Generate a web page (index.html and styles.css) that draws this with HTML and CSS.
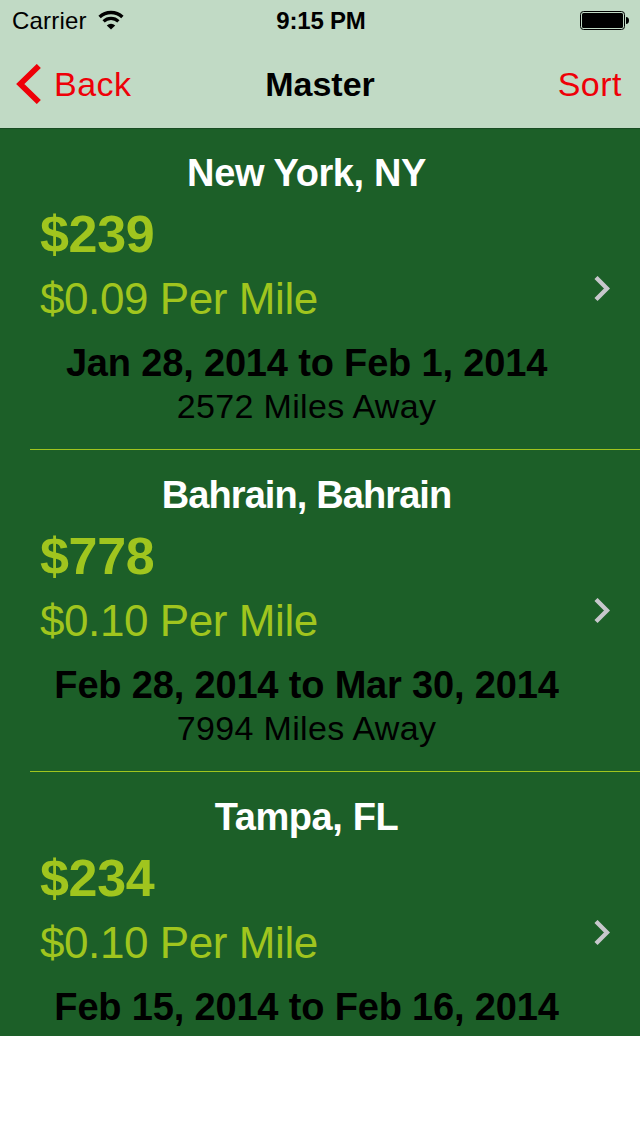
FILE: index.html
```html
<!DOCTYPE html>
<html lang="en">
<head>
    <meta charset="UTF-8">
    <meta name="viewport" content="width=device-width, initial-scale=1.0">
    <title>Master</title>
    <link rel="stylesheet" href="styles.css">
</head>
<body>
    <header class="header">
        <div class="status-bar">
            <div class="status-left">
                <span class="carrier">Carrier</span>
                <svg class="wifi" width="26" height="20" viewBox="0 0 26 20">
                    <path d="M1.600 7 A16.500 16.500 0 0 1 24.400 7" fill="none" stroke="#000" stroke-width="3.4"/>
                    <path d="M5.600 11.300 A10.700 10.700 0 0 1 20.400 11.300" fill="none" stroke="#000" stroke-width="3.2"/>
                    <path d="M13 19.600 L8.800 15.400 A6.200 6.200 0 0 1 17.200 15.400 Z"/>
                </svg>
            </div>
            <span class="time">9:15 PM</span>
            <div class="status-right">
                <svg width="50" height="20" viewBox="0 0 50 20">
                    <rect x="0.5" y="0.5" width="44" height="18" rx="3" fill="none" stroke="#000"/>
                    <rect x="2" y="2" width="41" height="15" rx="1.5"/>
                    <path d="M46 6 C48 6 49 7.500 49 9.500 C49 11.500 48 13 46 13 Z"/>
                </svg>
            </div>
        </div>
        <nav class="nav-bar">
            <a class="back" href="#">
                <svg width="26" height="40" viewBox="0 0 26 40">
                    <path d="M22.800 2 L4.300 20 L22.800 38" fill="none" stroke="#ee0008" stroke-width="5.800"/>
                </svg>
                <span class="back-text">Back</span>
            </a>
            <h1 class="title">Master</h1>
            <a class="sort" href="#">Sort</a>
        </nav>
    </header>

    <main class="trips">
        <div class="trip">
            <div class="info">
                <div class="city">New York, NY</div>
                <div class="price">$239</div>
                <div class="per-mile">$0.09 Per Mile</div>
                <div class="dates">Jan 28, 2014 to Feb 1, 2014</div>
                <div class="away">2572 Miles Away</div>
            </div>
            <svg class="arrow" width="16" height="26" viewBox="0 0 16 26">
                <path d="M2 1.500 L13 12.500 L2 23.500" fill="none" stroke="#c7c7cc" stroke-width="4.400"/>
            </svg>
        </div>
        <div class="trip">
            <div class="info">
                <div class="city city-long">Bahrain, Bahrain</div>
                <div class="price">$778</div>
                <div class="per-mile">$0.10 Per Mile</div>
                <div class="dates">Feb 28, 2014 to Mar 30, 2014</div>
                <div class="away">7994 Miles Away</div>
            </div>
            <svg class="arrow" width="16" height="26" viewBox="0 0 16 26">
                <path d="M2 1.500 L13 12.500 L2 23.500" fill="none" stroke="#c7c7cc" stroke-width="4.400"/>
            </svg>
        </div>
        <div class="trip">
            <div class="info">
                <div class="city">Tampa, FL</div>
                <div class="price">$234</div>
                <div class="per-mile">$0.10 Per Mile</div>
                <div class="dates">Feb 15, 2014 to Feb 16, 2014</div>
            </div>
            <svg class="arrow" width="16" height="26" viewBox="0 0 16 26">
                <path d="M2 1.500 L13 12.500 L2 23.500" fill="none" stroke="#c7c7cc" stroke-width="4.400"/>
            </svg>
        </div>
    </main>
</body>
</html>
```
FILE: styles.css
```css
* {
    box-sizing: border-box;
}

body {
    margin: 0;
    width: 640px;
    height: 1136px;
    overflow: hidden;
    font-family: "Liberation Sans", Arial, sans-serif;
    background-color: #fff;
    color: #000;
}

svg {
    display: block;
}

.header {
    height: 128px;
    background-color: #c1dac5;
}

.status-bar {
    height: 42px;
    padding: 0 10px 0 12px;
    display: grid;
    grid-template-columns: 1fr auto 1fr;
    align-items: center;
    font-size: 24px;
    line-height: 42px;
}

.status-left {
    display: flex;
    align-items: center;
    gap: 11px;
}

.carrier {
    letter-spacing: 0.2px;
}

.wifi {
    margin-bottom: 2px;
}

.time {
    font-weight: bold;
    letter-spacing: -0.2px;
}

.status-right {
    display: flex;
    justify-content: flex-end;
}

.nav-bar {
    height: 84px;
    padding: 0 18px 0 16px;
    display: grid;
    grid-template-columns: 1fr auto 1fr;
    align-items: center;
    font-size: 34px;
    line-height: 84px;
}

.back, .sort {
    color: #ee0008;
    text-decoration: none;
    letter-spacing: 0.5px;
}

.back {
    display: flex;
    align-items: center;
    gap: 12px;
}

.sort {
    text-align: right;
}

.title {
    margin: 0;
    padding-left: 2px;
    font-size: 34px;
}

.trips {
    height: 908px;
    overflow: hidden;
    background-color: #1c5f28;
    border-top: 1px solid #184c23;
}

.trip {
    height: 322px;
    margin-left: 30px;
    padding: 14px 30px 0 10px;
    display: flex;
    justify-content: space-between;
    border-bottom: 1px solid #a0c51e;
}

/* the list border takes the first pixel */
.trip:first-child {
    height: 321px;
    padding-top: 13px;
}

.info {
    width: 533px;
    text-align: center;
}

.city {
    font-size: 38px;
    line-height: 62px;
    font-weight: bold;
    letter-spacing: -0.4px;
    color: #fff;
}

.city-long {
    letter-spacing: -0.9px;
}

.price {
    font-size: 52px;
    line-height: 60px;
    font-weight: bold;
    letter-spacing: -0.3px;
    color: #a0c51e;
    text-align: left;
}

.per-mile {
    font-size: 44px;
    line-height: 70px;
    letter-spacing: -0.42px;
    color: #a0c51e;
    text-align: left;
}

.dates {
    font-size: 38px;
    line-height: 58px;
    font-weight: bold;
    letter-spacing: -0.17px;
    white-space: nowrap;
}

.away {
    font-size: 34px;
    line-height: 28px;
    letter-spacing: 0.33px;
}

.arrow {
    margin-top: 134px;
}
```
